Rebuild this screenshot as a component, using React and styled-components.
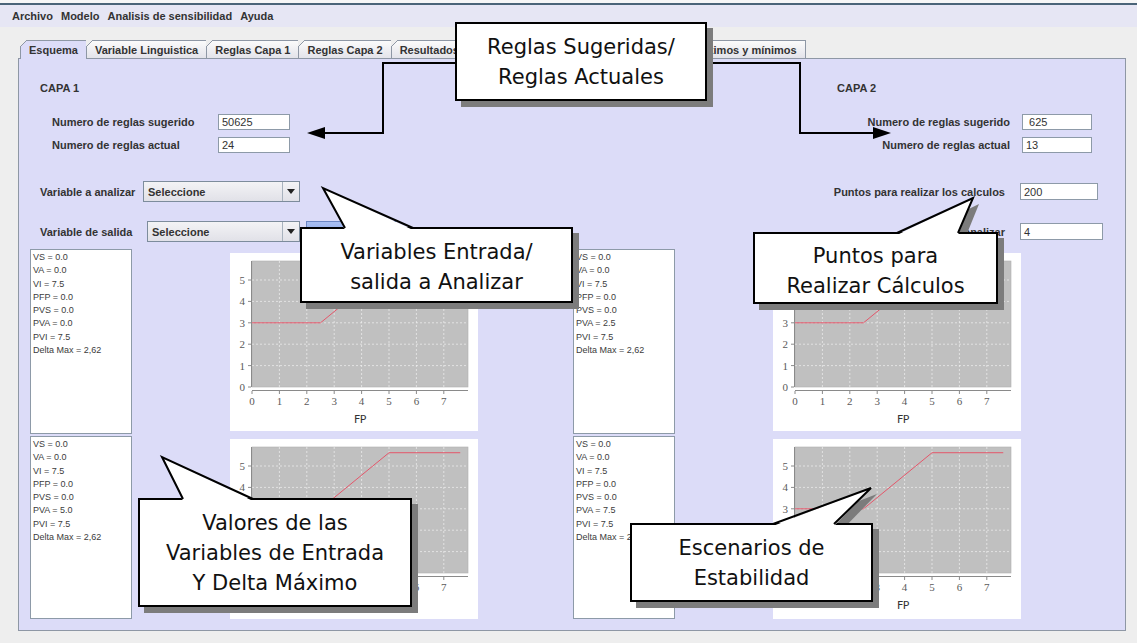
import styled, { createGlobalStyle } from 'styled-components';

const ui = '"Liberation Sans", Arial, sans-serif';

const GlobalStyle = createGlobalStyle`
  html, body { margin: 0; padding: 0; }
  body { background: #eeeeee; font-family: ${ui}; }
`;

const Page = styled.div`
  position: relative;
  width: 1137px;
  height: 643px;
  overflow: hidden;
  background: #eeeeee;
`;

const TopRule = styled.div`
  height: 3px;
  background: #f6f6f6;
  border-bottom: 2px solid #4a6478;
`;

const MenuBar = styled.div`
  height: 22px;
  display: flex;
  align-items: center;
  gap: 8px;
  padding-left: 12px;
  background: #e6e6f4;
`;

const MenuItem = styled.span`
  font: bold 11px ${ui};
  color: #333;
`;

const TabStrip = styled.div`
  display: flex;
  margin-top: 13px;
  padding-left: 21px;
  position: relative;
  z-index: 1;
`;

const Tab = styled.div`
  position: relative;
  height: ${(p) => (p.$active ? 19 : 18)}px;
  margin-bottom: ${(p) => (p.$active ? -1 : 0)}px;
  box-sizing: border-box;
  padding: 0 8px;
  margin-left: -1px;
  display: flex;
  align-items: center;
  font: bold 11px ${ui};
  color: #333;
  white-space: nowrap;
  border: 1px solid #8e97a5;
  border-bottom: none;
  background: ${(p) => (p.$active ? '#dcdcf8' : 'linear-gradient(#fbfbfb, #e3e3ea)')};

  &::before {
    content: '';
    position: absolute;
    left: -1px;
    top: -1px;
    width: 7px;
    height: 7px;
    background: linear-gradient(
      135deg,
      #eeeeee 0 calc(50% - 0.7px),
      #8e97a5 calc(50% - 0.7px) calc(50% + 0.7px),
      transparent calc(50% + 0.7px)
    );
  }
`;

const Panel = styled.div`
  margin-left: 18px;
  width: 1108px;
  height: 573px;
  box-sizing: border-box;
  border: 1px solid #8e97a5;
  background: #dcdcf8;
  padding-left: 11px;
`;

const TopGrid = styled.div`
  display: grid;
  grid-template-columns: 543px 543px;
`;

const Column = styled.div`
  display: flex;
  flex-direction: column;
`;

const LayerTitle = styled.div`
  height: 14px;
  line-height: 14px;
  margin-top: 23px;
  margin-left: ${(p) => p.$indent}px;
  font: bold 11px ${ui};
  color: #333;
`;

const Row = styled.div`
  display: flex;
  align-items: center;
  height: ${(p) => p.$h}px;
  margin-top: ${(p) => p.$mt}px;
  padding-left: ${(p) => p.$pl || 0}px;
  padding-right: ${(p) => p.$pr || 0}px;
  justify-content: ${(p) => (p.$right ? 'flex-end' : 'flex-start')};
  gap: ${(p) => p.$gap || 0}px;
`;

const Label = styled.span`
  width: ${(p) => (p.$w ? `${p.$w}px` : 'auto')};
  flex-shrink: 0;
  font: bold 11px ${ui};
  color: #333;
  white-space: nowrap;
`;

const TextInput = styled.div`
  width: ${(p) => p.$w}px;
  height: ${(p) => p.$h || 16}px;
  box-sizing: border-box;
  background: #fff;
  border: 1px solid #8d9aa8;
  padding-left: 3px;
  display: flex;
  align-items: center;
  font: 11px ${ui};
  color: #333;
  white-space: pre;
`;

const Combo = styled.div`
  width: ${(p) => p.$w}px;
  height: 21px;
  box-sizing: border-box;
  border: 1px solid #7d8c9c;
  background: linear-gradient(#f3f3f5, #e1e1e8);
  display: flex;
`;

const ComboText = styled.span`
  flex: 1;
  padding-left: 4px;
  display: flex;
  align-items: center;
  font: bold 11px ${ui};
  color: #333;
`;

const ComboArrow = styled.span`
  width: 16px;
  border-left: 1px solid #a8b2be;
  display: flex;
  align-items: center;
  justify-content: center;

  &::after {
    content: '';
    border-left: 4px solid transparent;
    border-right: 4px solid transparent;
    border-top: 5px solid #222;
  }
`;

const BlueButton = styled.div`
  width: 90px;
  height: 22px;
  margin-left: 6px;
  box-sizing: border-box;
  border: 1px solid #6b86c4;
  background: linear-gradient(#a9bff2, #7f9ce2);
`;

const ResultsGrid = styled.div`
  display: grid;
  grid-template-columns: 543px 543px;
  margin-top: 7px;
`;

const ResultsSide = styled.div`
  display: grid;
  grid-template-columns: 102px 248px;
  grid-template-rows: 185px 183px;
  column-gap: 98px;
  row-gap: 2px;
`;

const Values = styled.div`
  box-sizing: border-box;
  background: #fff;
  border: 1px solid #8d9aa8;
  padding: 1px 2px;
  font: 9px/13.3px ${ui};
  color: #3c3c3c;
  white-space: nowrap;
  overflow: hidden;
`;

const ChartBox = styled.div`
  background: #fff;
  margin-top: ${(p) => p.$mt}px;
  height: ${(p) => p.$h}px;
  overflow: hidden;
`;

const CalloutBox = styled.div`
  position: absolute;
  left: ${(p) => p.$x}px;
  top: ${(p) => p.$y}px;
  width: ${(p) => p.$w}px;
  height: ${(p) => p.$h}px;
  z-index: 5;
`;

const CalloutShape = styled.svg`
  position: absolute;
  left: 0;
  top: 0;
  overflow: visible;
`;

const CalloutText = styled.div`
  position: absolute;
  inset: 0;
  padding-top: ${(p) => p.$dy || 0}px;
  display: flex;
  flex-direction: column;
  align-items: center;
  justify-content: center;
  font: 21px/30px "DejaVu Sans", Verdana, sans-serif;
  color: #111;
  white-space: nowrap;
`;

const Connectors = styled.svg`
  position: absolute;
  left: 0;
  top: 0;
  z-index: 4;
  pointer-events: none;
`;

const TABS = [
  'Esquema',
  'Variable Linguistica',
  'Reglas Capa 1',
  'Reglas Capa 2',
  'Resultados Capa 1',
  'Resultados Capa 2',
  'Gráficos',
  'Máximos y mínimos',
];

const X0 = 22;
const Y0 = 134;
const UX = 27.4;
const UY = 21.4;
const px = (v) => X0 + v * UX;
const py = (v) => Y0 - v * UY;
const LINE = [
  [0, 3],
  [2.5, 3],
  [5, 5.62],
  [7.6, 5.62],
];

function Chart({ mt, h }) {
  return (
    <ChartBox $mt={mt} $h={h}>
      <svg width="248" height="178" viewBox="0 0 248 178">
        <rect x="22" y="8" width="216" height="126" fill="#c0c0c0" stroke="#b0b0b0" strokeWidth="0.6" />
        {[1, 2, 3, 4, 5, 6, 7].map((v) => (
          <line key={`gx${v}`} x1={px(v)} x2={px(v)} y1="8" y2="134" stroke="#f0f0f0" strokeWidth="0.7" strokeDasharray="2 2" />
        ))}
        {[1, 2, 3, 4, 5].map((v) => (
          <line key={`gy${v}`} x1="22" x2="238" y1={py(v)} y2={py(v)} stroke="#f0f0f0" strokeWidth="0.7" strokeDasharray="2 2" />
        ))}
        <polyline
          points={LINE.map(([x, y]) => `${px(x)},${py(y)}`).join(' ')}
          fill="none"
          stroke="#e4566a"
          strokeWidth="1"
        />
        <line x1="21.5" y1="8" x2="21.5" y2="134" stroke="#8a8a8a" />
        <line x1="22" y1="137.5" x2="238" y2="137.5" stroke="#8a8a8a" />
        {[0, 1, 2, 3, 4, 5].map((v) => (
          <g key={`ty${v}`}>
            <line x1="18" x2="21" y1={py(v)} y2={py(v)} stroke="#8a8a8a" />
            <text x="15" y={py(v) + 4} textAnchor="end" fontSize="11" fontFamily='"Liberation Serif", serif' fill="#5a5a5a">
              {v}
            </text>
          </g>
        ))}
        {[0, 1, 2, 3, 4, 5, 6, 7].map((v) => (
          <g key={`tx${v}`}>
            <line x1={px(v)} x2={px(v)} y1="138" y2="141" stroke="#8a8a8a" />
            <text x={px(v)} y="152" textAnchor="middle" fontSize="11" fontFamily='"Liberation Serif", serif' fill="#5a5a5a">
              {v}
            </text>
          </g>
        ))}
        <text x="130" y="170" textAnchor="middle" fontSize="11" fontFamily='"DejaVu Sans", sans-serif' fill="#333" letterSpacing="-0.5">
          FP
        </text>
      </svg>
    </ChartBox>
  );
}

function ValueList({ pva }) {
  const rows = ['VS = 0.0', 'VA = 0.0', 'VI = 7.5', 'PFP = 0.0', 'PVS = 0.0', `PVA = ${pva}`, 'PVI = 7.5', 'Delta Max = 2,62'];
  return (
    <Values>
      {rows.map((r) => (
        <div key={r}>{r}</div>
      ))}
    </Values>
  );
}

function Callout({ x, y, w, h, tail, lines, dy }) {
  const s = 6;
  return (
    <CalloutBox $x={x} $y={y} $w={w} $h={h}>
      <CalloutShape width={w} height={h}>
        {tail && (
          <polygon points={`${tail.a + s},${s + 3} ${tail.tx + s},${tail.ty + s} ${tail.b + s},${s + 3}`} fill="#7c7c7c" />
        )}
        <rect x={s} y={s} width={w} height={h} fill="#7c7c7c" />
        <rect x="1" y="1" width={w - 2} height={h - 2} fill="#fff" stroke="#000" strokeWidth="2" />
        {tail && (
          <>
            <polygon points={`${tail.a},3 ${tail.tx},${tail.ty} ${tail.b},3`} fill="#fff" />
            <polyline points={`${tail.a},1 ${tail.tx},${tail.ty} ${tail.b},1`} fill="none" stroke="#000" strokeWidth="2" />
          </>
        )}
      </CalloutShape>
      <CalloutText $dy={dy}>
        {lines.map((l) => (
          <span key={l}>{l}</span>
        ))}
      </CalloutText>
    </CalloutBox>
  );
}

export default function App() {
  return (
    <Page>
      <GlobalStyle />
      <TopRule />
      <MenuBar>
        <MenuItem>Archivo</MenuItem>
        <MenuItem>Modelo</MenuItem>
        <MenuItem>Analisis de sensibilidad</MenuItem>
        <MenuItem>Ayuda</MenuItem>
      </MenuBar>

      <TabStrip>
        {TABS.map((t, i) => (
          <Tab key={t} $active={i === 0}>
            {t}
          </Tab>
        ))}
      </TabStrip>

      <Panel>
        <TopGrid>
          <Column>
            <LayerTitle $indent={10}>CAPA 1</LayerTitle>
            <Row $h={16} $mt={18} $pl={22}>
              <Label $w={166}>Numero de reglas sugerido</Label>
              <TextInput $w={72}>50625</TextInput>
            </Row>
            <Row $h={16} $mt={7} $pl={22}>
              <Label $w={166}>Numero de reglas actual</Label>
              <TextInput $w={72}>24</TextInput>
            </Row>
            <Row $h={21} $mt={28} $pl={10}>
              <Label $w={103}>Variable a analizar</Label>
              <Combo $w={157}>
                <ComboText>Seleccione</ComboText>
                <ComboArrow />
              </Combo>
            </Row>
            <Row $h={21} $mt={19} $pl={10}>
              <Label $w={107}>Variable de salida</Label>
              <Combo $w={153}>
                <ComboText>Seleccione</ComboText>
                <ComboArrow />
              </Combo>
              <BlueButton />
            </Row>
          </Column>

          <Column>
            <LayerTitle $indent={264}>CAPA 2</LayerTitle>
            <Row $h={16} $mt={18} $pr={24} $gap={12} $right>
              <Label>Numero de reglas sugerido</Label>
              <TextInput $w={70}> 625</TextInput>
            </Row>
            <Row $h={16} $mt={7} $pr={24} $gap={12} $right>
              <Label>Numero de reglas actual</Label>
              <TextInput $w={70}>13</TextInput>
            </Row>
            <Row $h={21} $mt={28} $pr={18} $gap={15} $right>
              <Label>Puntos para realizar los calculos</Label>
              <TextInput $w={78} $h={17}>200</TextInput>
            </Row>
            <Row $h={21} $mt={19} $pr={13} $gap={15} $right>
              <Label>Puntos a analizar</Label>
              <TextInput $w={83} $h={17}>4</TextInput>
            </Row>
          </Column>
        </TopGrid>

        <ResultsGrid>
          <ResultsSide>
            <ValueList pva="0.0" />
            <Chart mt={4} h={178} />
            <ValueList pva="5.0" />
            <Chart mt={3} h={180} />
          </ResultsSide>
          <ResultsSide>
            <ValueList pva="2.5" />
            <Chart mt={4} h={178} />
            <ValueList pva="7.5" />
            <Chart mt={3} h={180} />
          </ResultsSide>
        </ResultsGrid>
      </Panel>

      <Connectors width="1137" height="643">
        <polyline points="455,63 383,63 383,133 322,133" fill="none" stroke="#000" strokeWidth="2" />
        <polygon points="307,133 325,127 325,139" fill="#000" />
        <polyline points="707,63 800,63 800,133 876,133" fill="none" stroke="#000" strokeWidth="2" />
        <polygon points="891,133 873,127 873,139" fill="#000" />
      </Connectors>

      <Callout x={455} y={22} w={252} h={79} lines={['Reglas Sugeridas/', 'Reglas Actuales']} />
      <Callout
        x={300}
        y={227}
        w={273}
        h={76}
        dy={4}
        tail={{ a: 45, b: 113, tx: 23, ty: -39 }}
        lines={['Variables Entrada/', 'salida a Analizar']}
      />
      <Callout
        x={753}
        y={232}
        w={245}
        h={72}
        dy={6}
        tail={{ a: 144, b: 205, tx: 220, ty: -34 }}
        lines={['Puntos para', 'Realizar Cálculos']}
      />
      <Callout
        x={138}
        y={498}
        w={274}
        h={109}
        tail={{ a: 45, b: 115, tx: 24, ty: -41 }}
        lines={['Valores de las', 'Variables de Entrada', 'Y Delta Máximo']}
      />
      <Callout
        x={630}
        y={523}
        w={243}
        h={79}
        tail={{ a: 143, b: 204, tx: 241, ty: -35 }}
        lines={['Escenarios de', 'Estabilidad']}
      />
    </Page>
  );
}
